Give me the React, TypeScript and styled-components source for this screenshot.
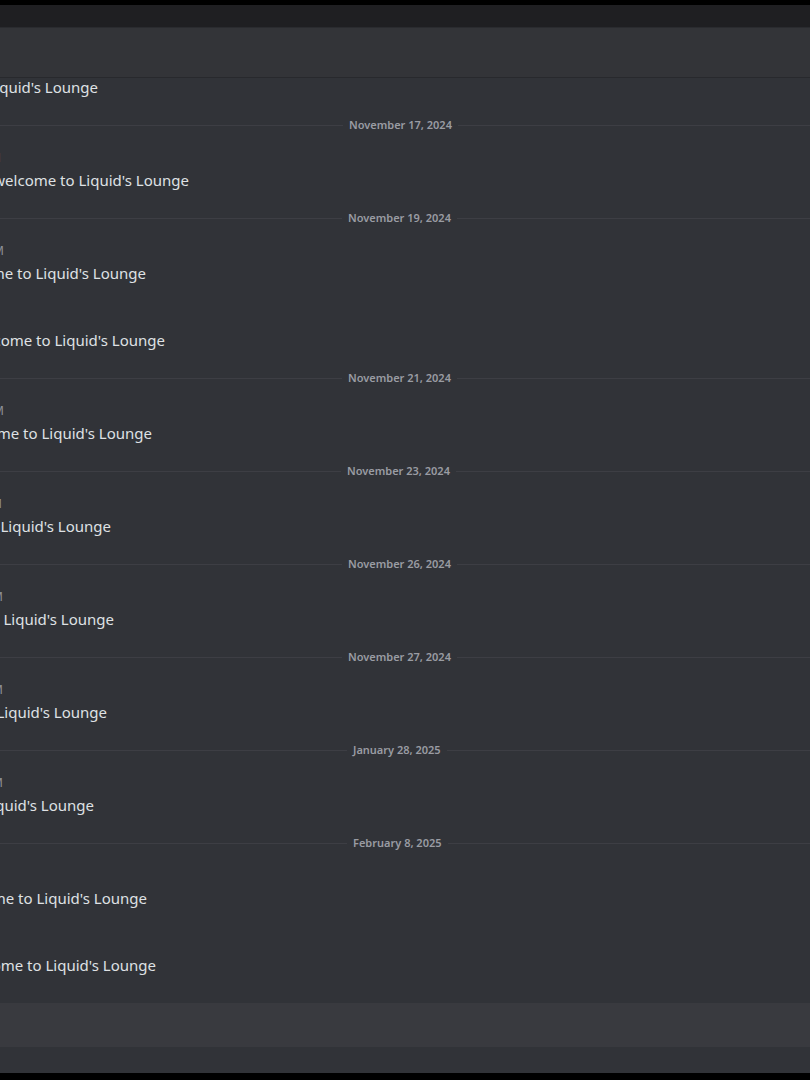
import React from 'react'
import styled, { createGlobalStyle } from 'styled-components'

const GlobalStyle = createGlobalStyle`
  html, body {
    margin: 0;
    padding: 0;
    background: #000;
  }
  body {
    font-family: "Noto Sans", "Open Sans", sans-serif;
    overflow: hidden;
  }
`

const Frame = styled.div`
  width: 810px;
  height: 1080px;
  display: flex;
  flex-direction: column;
  background: #000;
  overflow: hidden;
`

const TopEdge = styled.div`
  height: 5px;
  flex-shrink: 0;
  background: #000;
`

const TitleBar = styled.div`
  height: 22px;
  flex-shrink: 0;
  background: #1f1f22;
  border-bottom: 1px solid #2a2b2f;
`

const Header = styled.header`
  height: 49px;
  flex-shrink: 0;
  background: #333438;
  border-bottom: 1px solid #28292d;
`

const Main = styled.main`
  flex: 1;
  display: flex;
  flex-direction: column;
  background: #313338;
  min-height: 0;
`

const Scroller = styled.div`
  flex: 1;
  overflow: hidden;
  min-height: 0;
`

// scrolled list: first message is half under the header
const List = styled.div`
  display: flex;
  flex-direction: column;
  margin-top: -2px;
`

const Divider = styled.div`
  height: 16px;
  margin-bottom: 10px;
  display: flex;
  align-items: center;
`

const Rule = styled.div<{ $w?: number }>`
  height: 1px;
  background: #3d3e44;
  ${p => (p.$w ? `width: ${p.$w}px; flex-shrink: 0;` : 'flex: 1;')}
`

const DividerLabel = styled.span`
  padding: 0 6px;
  font-size: 11px;
  font-weight: 600;
  line-height: 16px;
  color: #9a9ca3;
  white-space: nowrap;
  flex-shrink: 0;
`

const Group = styled.div<{ $first?: boolean }>`
  padding: ${p => (p.$first ? '0' : '4px')} 0 19px;
  display: flex;
  flex-direction: column;
`

// text is cut by the left edge of the window; it is aligned on its end
const Line = styled.div<{ $end: number }>`
  width: ${p => p.$end}px;
  height: 22px;
  display: flex;
  justify-content: flex-end;
`

const Stamp = styled.span`
  font-size: 12px;
  line-height: 22px;
  color: #8e9199;
  white-space: nowrap;
  flex-shrink: 0;
`

const Content = styled.span`
  font-size: 15px;
  line-height: 22px;
  color: #dfe1e4;
  white-space: nowrap;
  flex-shrink: 0;
`

const Composer = styled.div`
  height: 77px;
  flex-shrink: 0;
  display: flex;
  flex-direction: column;
  background: #313338;
`

const InputBar = styled.div`
  height: 44px;
  background: #393a3f;
`

const BottomEdge = styled.div`
  margin-top: auto;
  height: 7px;
  background: #000;
`

type Item =
  | { kind: 'day'; label: string; left: number }
  | { kind: 'msg'; text: string; end: number; stamp?: number; first?: boolean }

const items: Item[] = [
  { kind: 'msg', text: "Hey, welcome to Liquid's Lounge", end: 98, first: true },
  { kind: 'day', label: 'November 17, 2024', left: 343 },
  { kind: 'msg', text: "Hey there, welcome to Liquid's Lounge", end: 189, stamp: 1 },
  { kind: 'day', label: 'November 19, 2024', left: 342 },
  { kind: 'msg', text: "Welcome to Liquid's Lounge", end: 146, stamp: 4 },
  { kind: 'msg', text: "Welcome to Liquid's Lounge", end: 165 },
  { kind: 'day', label: 'November 21, 2024', left: 342 },
  { kind: 'msg', text: "Welcome to Liquid's Lounge", end: 152, stamp: 4 },
  { kind: 'day', label: 'November 23, 2024', left: 341 },
  { kind: 'msg', text: "Welcome to Liquid's Lounge", end: 111, stamp: 2 },
  { kind: 'day', label: 'November 26, 2024', left: 342 },
  { kind: 'msg', text: "Welcome to Liquid's Lounge", end: 114, stamp: 3 },
  { kind: 'day', label: 'November 27, 2024', left: 342 },
  { kind: 'msg', text: "Welcome to Liquid's Lounge", end: 107, stamp: 3 },
  { kind: 'day', label: 'January 28, 2025', left: 347 },
  { kind: 'msg', text: "Welcome to Liquid's Lounge", end: 94, stamp: 3 },
  { kind: 'day', label: 'February 8, 2025', left: 347 },
  { kind: 'msg', text: "Welcome to Liquid's Lounge", end: 147 },
  { kind: 'msg', text: "Welcome to Liquid's Lounge", end: 156 },
]

const App: React.FC = () => {
  return (
    <>
      <GlobalStyle />
      <Frame>
        <TopEdge />
        <TitleBar />
        <Header />
        <Main>
          <Scroller>
            <List>
              {items.map((item, i) =>
                item.kind === 'day' ? (
                  <Divider key={i}>
                    <Rule $w={item.left} />
                    <DividerLabel>{item.label}</DividerLabel>
                    <Rule />
                  </Divider>
                ) : (
                  <Group key={i} $first={item.first}>
                    {!item.first && (
                      <Line $end={item.stamp ?? 0}>
                        {item.stamp ? <Stamp>Today at 8:14 PM</Stamp> : null}
                      </Line>
                    )}
                    <Line $end={item.end}>
                      <Content>{item.text}</Content>
                    </Line>
                  </Group>
                )
              )}
            </List>
          </Scroller>
          <Composer>
            <InputBar />
            <BottomEdge />
          </Composer>
        </Main>
      </Frame>
    </>
  )
}

export default App
